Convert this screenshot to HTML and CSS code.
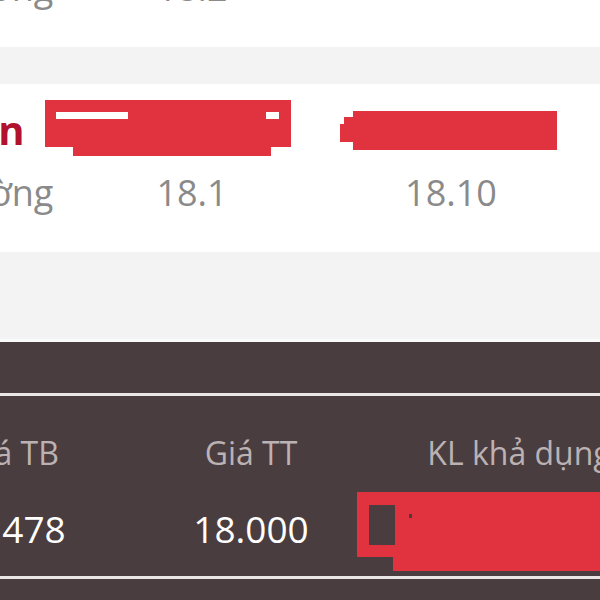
FILE: index.html
```html
<!DOCTYPE html>
<html lang="vi">
<head>
<meta charset="utf-8">
<title>Danh mục</title>
<link rel="stylesheet" href="styles.css">
</head>
<body>
<div class="page">
  <section class="card card-first">
    <div class="grid row-head">
      <div class="label-strong">Giá vốn</div>
      <div class="cell"></div>
      <div class="cell"></div>
    </div>
    <div class="grid row-body">
      <div class="label">Thị trường</div>
      <div class="num">18.2</div>
      <div class="num"></div>
    </div>
  </section>

  <section class="card">
    <div class="grid row-head">
      <div class="label-strong">Giá vốn</div>
      <div class="cell">
        <svg class="redact redact-a" width="246" height="57" viewBox="0 0 246 57" aria-hidden="true">
          <path d="M0 0H246V47H226V56H28V47H0Z" fill="#e1323f"/>
          <rect x="11" y="12" width="72" height="7" fill="#fff"/>
          <rect x="221" y="12" width="13" height="7" fill="#fff"/>
        </svg>
      </div>
      <div class="cell">
        <svg class="redact redact-b" width="217" height="41" viewBox="0 0 217 41" aria-hidden="true">
          <path d="M13 1H217V40H13V32H0V14H4V7H13Z" fill="#e1323f"/>
        </svg>
      </div>
    </div>
    <div class="grid row-body">
      <div class="label">Thị trường</div>
      <div class="num">18.1</div>
      <div class="num">18.10</div>
    </div>
  </section>

  <section class="dark">
    <div class="rule"></div>
    <div class="dgrid">
      <div class="dlabel">Giá TB</div>
      <div class="dlabel">Giá TT</div>
      <div class="dlabel">KL khả dụng</div>
      <div class="dval dval-first">18.478</div>
      <div class="dval">18.000</div>
      <div class="dval cell">
        <svg class="redact redact-c" width="260" height="79" viewBox="0 0 260 79" aria-hidden="true">
          <path d="M0 0H260V79H36V65H0Z" fill="#e1323f"/>
          <rect x="12" y="13" width="26" height="40" fill="#4a3d3f"/>
          <rect x="52" y="22" width="3" height="4" fill="#4a3d3f"/>
        </svg>
      </div>
    </div>
    <div class="rule rule-bottom"></div>
  </section>
</div>
</body>
</html>
```

FILE: styles.css
```css
html, body {
  margin: 0;
  padding: 0;
}
body {
  background: #f3f3f3;
  font-family: "Open Sans", "Noto Sans", sans-serif;
  width: 600px;
  height: 600px;
  overflow: hidden;
}
.page {
  display: flex;
  flex-direction: column;
}
.card {
  background: #ffffff;
  height: 168px;
  box-sizing: border-box;
  padding-top: 16px;
  overflow: hidden;
}
.card-first {
  margin-top: -121px;
  margin-bottom: 37px;
}
.grid {
  display: grid;
  grid-template-columns: 200px 234px 284px;
  margin-left: -122px;
}
.row-head {
  height: 60px;
}
.row-body {
  margin-top: 11px;
}
.label-strong {
  font-size: 40px;
  line-height: 60px;
  font-weight: 700;
  color: #b1122d;
  white-space: nowrap;
  margin-left: -3px;
}
.label {
  font-size: 36px;
  line-height: 44px;
  color: #8a8a8a;
  white-space: nowrap;
}
.num {
  font-size: 36px;
  line-height: 44px;
  color: #8a8a8a;
  text-align: center;
  margin-left: -3px;
  margin-right: 3px;
}
.cell {
  position: relative;
}
.redact {
  position: absolute;
  display: block;
}
.redact-a {
  left: -33px;
  top: 0;
}
.redact-b {
  left: 28px;
  top: 10px;
}
.dark {
  margin-top: 87px;
  border-top: 3px solid #fafafa;
  background: #4a3d3f;
  height: 300px;
  padding-top: 51px;
  box-sizing: border-box;
  overflow: hidden;
}
.rule {
  height: 3px;
  background: #ebe6e6;
}
.rule-bottom {
  height: 3px;
}
.dgrid {
  display: grid;
  grid-template-columns: 222px 258px 278px;
  margin-left: -100px;
  padding: 37px 0 25px;
  row-gap: 34px;
  text-align: center;
}
.dlabel {
  font-size: 32px;
  line-height: 40px;
  color: #bbb2b3;
  white-space: nowrap;
}
.dval {
  font-size: 37px;
  line-height: 44px;
  color: #ffffff;
  font-weight: 400;
  white-space: nowrap;
}
.dval-first {
  padding-right: 6px;
}
.redact-c {
  left: -23px;
  top: -15px;
}
```
